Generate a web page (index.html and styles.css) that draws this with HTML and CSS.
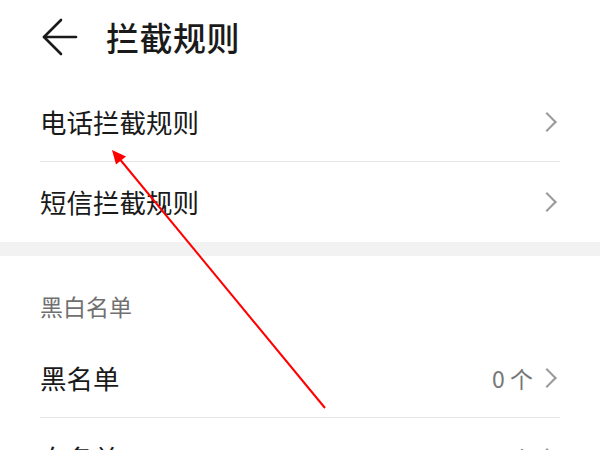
FILE: index.html
```html
<!DOCTYPE html>
<html lang="zh-CN">
<head>
<meta charset="utf-8">
<title>拦截规则</title>
<link rel="stylesheet" href="styles.css">
</head>
<body>
<div class="page">
  <header class="topbar">
    <svg class="back" width="36" height="38" viewBox="0 0 36 38" fill="none" stroke="#1a1a1a" stroke-width="2.6" stroke-linecap="round" stroke-linejoin="round">
      <path d="M2 19 H34"/>
      <path d="M19 2 L2 19 L19 36"/>
    </svg>
    <h1 class="title">拦截规则</h1>
  </header>

  <section class="group">
    <div class="row">
      <span class="label">电话拦截规则</span>
      <span class="chev"></span>
    </div>
    <div class="row row-last">
      <span class="label">短信拦截规则</span>
      <span class="chev"></span>
    </div>
  </section>

  <div class="band"></div>

  <section class="group">
    <div class="section-title">黑白名单</div>
    <div class="row">
      <span class="label">黑名单</span>
      <span class="meta">0 个</span>
      <span class="chev"></span>
    </div>
    <div class="row row-last">
      <span class="label">白名单</span>
      <span class="meta">0 个</span>
      <span class="chev"></span>
    </div>
  </section>

  <svg class="annot" width="600" height="450" viewBox="0 0 600 450">
    <line x1="325" y1="408" x2="118" y2="157" stroke="#ff0000" stroke-width="2"/>
    <polygon points="112,150 126,156.5 116,164.5" fill="#ff0000"/>
  </svg>
</div>
</body>
</html>
```
FILE: styles.css
```css
html, body {
  margin: 0;
  padding: 0;
  background: #ffffff;
}

body {
  font-family: "Noto Sans CJK SC", "Noto Sans", sans-serif;
  color: #1a1a1a;
  width: 600px;
  height: 450px;
  overflow: hidden;
}

.page {
  position: relative;
  width: 600px;
  height: 450px;
  overflow: hidden;
}

.topbar {
  height: 82px;
  box-sizing: border-box;
  padding: 0 0 8px 42px;
  display: flex;
  align-items: center;
}

.back {
  display: block;
  flex: none;
}

.title {
  margin: 0 0 0 28px;
  font-size: 33px;
  font-weight: 500;
  line-height: 40px;
  color: #1a1a1a;
  letter-spacing: 0.5px;
}

.group {
  padding: 0 40px;
}

.row {
  height: 80px;
  box-sizing: border-box;
  border-bottom: 1px solid #e6e6e6;
  display: flex;
  align-items: center;
}

.row-last {
  border-bottom: none;
}

.label {
  flex: 1;
  font-size: 26.5px;
  line-height: 34px;
  color: #1a1a1a;
}

.meta {
  font-size: 23px;
  line-height: 30px;
  color: #777777;
  margin-right: 7px;
}

.chev {
  width: 12px;
  height: 12px;
  border-top: 2px solid #999999;
  border-right: 2px solid #999999;
  transform: rotate(45deg);
  margin-right: 6px;
  flex: none;
}

.band {
  height: 14px;
  background: #f2f2f2;
}

.section-title {
  height: 82px;
  box-sizing: border-box;
  padding-top: 36px;
  font-size: 23px;
  line-height: 28px;
  color: #707070;
}

.annot {
  position: absolute;
  left: 0;
  top: 0;
  pointer-events: none;
}
```
